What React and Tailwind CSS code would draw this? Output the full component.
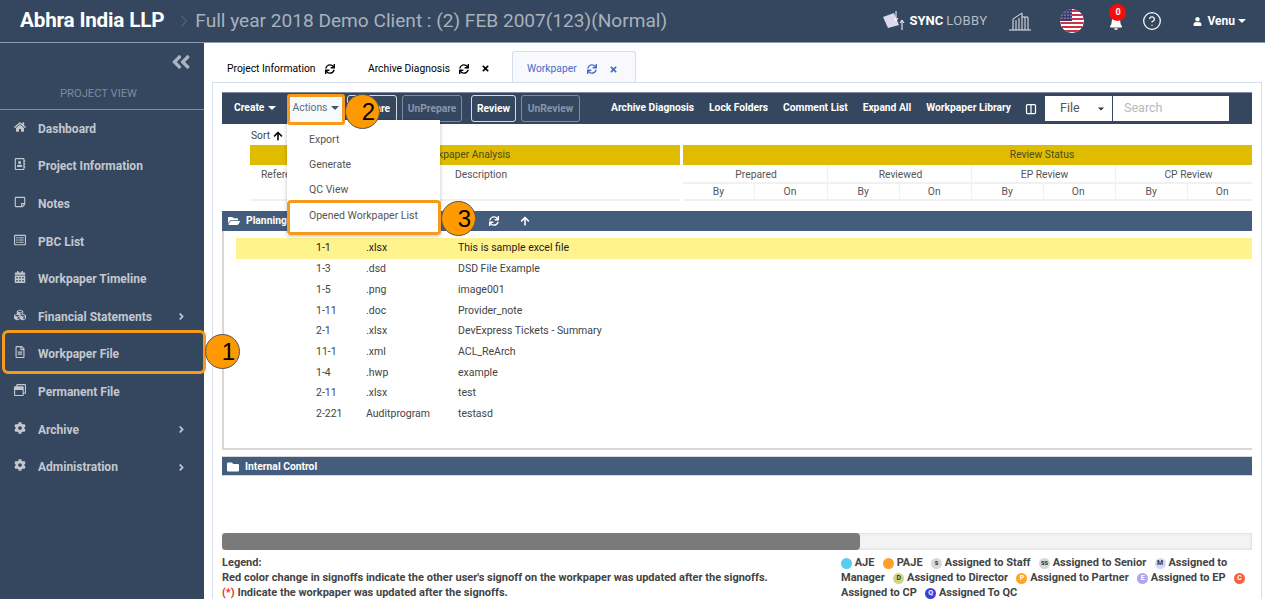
import { ChevronRight, CircleHelp, Columns2 } from 'lucide-react';
import { FaHome, FaCalendarAlt, FaCog, FaCubes, FaRegFileAlt, FaRegWindowRestore, FaRegStickyNote, FaRegListAlt, FaRegAddressBook, FaUser, FaBell, FaSync, FaArrowUp, FaFolderOpen, FaFolder, FaTimes, FaAngleDoubleLeft, FaAngleRight } from 'react-icons/fa';

const NAV = [
  { label: 'Dashboard', Icon: FaHome },
  { label: 'Project Information', Icon: FaRegAddressBook },
  { label: 'Notes', Icon: FaRegStickyNote },
  { label: 'PBC List', Icon: FaRegListAlt },
  { label: 'Workpaper Timeline', Icon: FaCalendarAlt },
  { label: 'Financial Statements', Icon: FaCubes, more: true },
  { label: 'Workpaper File', Icon: FaRegFileAlt },
  { label: 'Permanent File', Icon: FaRegWindowRestore },
  { label: 'Archive', Icon: FaCog, more: true },
  { label: 'Administration', Icon: FaCog, more: true },
];

const ROWS = [
  ['1-1', '.xlsx', 'This is sample excel file'],
  ['1-3', '.dsd', 'DSD File Example'],
  ['1-5', '.png', 'image001'],
  ['1-11', '.doc', 'Provider_note'],
  ['2-1', '.xlsx', 'DevExpress Tickets - Summary'],
  ['11-1', '.xml', 'ACL_ReArch'],
  ['1-4', '.hwp', 'example'],
  ['2-11', '.xlsx', 'test'],
  ['2-221', 'Auditprogram', 'testasd'],
];

const REVIEWS = ['Prepared', 'Reviewed', 'EP Review', 'CP Review'];

const Caret = ({ className = 'border-t-white' }) => (
  <span className={`inline-block w-0 h-0 border-x-[4px] border-x-transparent border-t-[4px] ${className}`} />
);

// numbered marks: the digit sits right of centre, as in the picture
const Callout = ({ n, className }) => (
  <div className={`absolute z-30 w-[35px] h-[35px] rounded-full bg-[#ff9900] border border-[#555] flex items-center justify-center pl-[12px] text-[24px] text-black font-['Liberation_Sans',sans-serif] ${className}`}>
    {n}
  </div>
);

const Flag = () => (
  <svg width="24" height="24" viewBox="0 0 24 24" className="rounded-full">
    <defs><clipPath id="c"><circle cx="12" cy="12" r="12" /></clipPath></defs>
    <g clipPath="url(#c)">
      <rect width="24" height="24" fill="#fff" />
      {[0, 4, 8, 12, 16, 20].map(y => <rect key={y} y={y + 1} width="24" height="2" fill="#c8334d" />)}
      <rect width="12" height="12" fill="#3c3b6e" />
      {[2, 5, 8, 11].map(x => [3, 6, 9].map(y => <circle key={x + '-' + y} cx={x} cy={y} r="0.6" fill="#fff" />))}
    </g>
  </svg>
);

const Dot = ({ bg, text = '', fg = 'text-[#333]' }) => (
  <span className={`inline-flex items-center justify-center align-text-bottom ml-[3px] first:ml-0 w-[11px] h-[11px] rounded-full text-[7px] leading-none font-bold ${bg} ${fg}`}>{text}</span>
);

const ToolButton = ({ children, w, off, className = '' }) => (
  <div className={`h-[27px] border rounded-[3px] flex items-center justify-center ${w} ${off ? 'border-[#7c8b9f] text-[#8796aa]' : 'border-white/80'} ${className}`}>{children}</div>
);

export default function App() {
  return (
    <div className="relative w-[1265px] h-[599px] overflow-hidden flex flex-col bg-white font-['Roboto','Liberation_Sans',sans-serif] text-[#333]">
      <header className="h-[43px] shrink-0 bg-[#34475f] border-b border-[#8b9bb0] flex items-center">
        <div className="ml-[20px] text-[20.7px] font-bold text-white tracking-[-0.2px]">Abhra India LLP</div>
        <ChevronRight className="ml-[10px] text-[#6f8097]" size={20} strokeWidth={1} />
        <div className="ml-[1px] text-[19.1px] text-[#a9b1bb]">Full year 2018 Demo Client : (2) FEB 2007(123)(Normal)</div>
        <div className="ml-auto flex items-center">
          <svg width="24" height="22" viewBox="0 0 24 22" className="mr-[4px]">
            <path d="M1 7 L12 3 L17 15 L6 18 Z" fill="#dcd8f2" />
            <path d="M14 1 V10 M12 8 L14 11 L16 8" stroke="#fff" fill="none" />
            <path d="M20 20 V11 M18 13 L20 10 L22 13" stroke="#fff" fill="none" />
          </svg>
          <span className="text-[13px] font-bold text-white">SYNC</span>
          <span className="ml-[3px] text-[13px] tracking-[0.4px] text-[#b4bcc8]">LOBBY</span>
          <svg width="22" height="20" viewBox="0 0 22 20" className="ml-[22px]" fill="none" stroke="#e5e7eb">
            <path d="M0 19 H22" />
            <path d="M4 19 V8 L13 2 V19 M7 9 V19 M10 7 V19" />
            <path d="M13 6 H19 V19 M16 6 V19" />
          </svg>
          <div className="ml-[29px]"><Flag /></div>
          <div className="relative ml-[25px] w-[14px] h-[16px]">
            <FaBell className="text-white mt-[3px]" size={14} />
            <span className="absolute -top-[9px] left-0 w-[17px] h-[17px] rounded-full bg-[#f50d0d] text-white text-[9px] font-bold flex items-center justify-center">0</span>
          </div>
          <CircleHelp className="ml-[19px] text-white" size={20} strokeWidth={1.5} />
          <FaUser className="ml-[31px] text-white" size={9} />
          <span className="ml-[5px] text-[12px] font-bold text-white">Venu</span>
          <Caret className="ml-[3px] border-t-white" />
          <div className="w-[19px]" />
        </div>
      </header>

      <div className="flex flex-1 min-h-0">
        <aside className="w-[204px] shrink-0 bg-[#34475f] flex flex-col">
          <div className="h-[38px] flex justify-end items-center pr-[12px]">
            <FaAngleDoubleLeft className="text-[#a9b4c2]" size={22} />
          </div>
          <div className="h-[28px] flex items-end justify-center pb-[6px] pr-[7px] text-[11.2px] text-[#7b8ba1]">PROJECT VIEW</div>
          <div className="h-px bg-[#7a8ea8]" />
          <nav className="flex flex-col">
            {NAV.map(({ label, Icon, more }) => (
              <div key={label} className="h-[37.6px] flex items-center pl-[14px] pr-[17px] text-[12px] font-bold text-[#c3c8cf]">
                <Icon size={12} className="w-[12px] -mt-[4px]" />
                <span className="ml-[12px]">{label}</span>
                {more && <FaAngleRight size={11} className="ml-auto" />}
              </div>
            ))}
          </nav>
        </aside>

        <main className="flex-1 min-w-0 flex flex-col">
          <div className="h-[39px] shrink-0 pt-[8px] pl-[23px] flex text-[10.3px] text-black">
            <div className="w-[141px] flex items-center pt-[4px]">
              <span>Project Information</span>
              <FaSync size={10} className="ml-[10px]" />
            </div>
            <div className="w-[144px] flex items-center pt-[4px]">
              <span>Archive Diagnosis</span>
              <FaSync size={10} className="ml-[9px]" />
              <FaTimes size={9} className="ml-[12px]" />
            </div>
            <div className="w-[124px] z-10 flex items-center pt-[4px] pl-[14px] text-[#4a6bc8] bg-[#f7f9fc] border border-[#d5dfee] border-b-0 rounded-t-[3px]">
              <span>Workpaper</span>
              <FaSync size={10} className="ml-[10px]" />
              <FaTimes size={9} className="ml-[12px]" />
            </div>
          </div>

          <div className="flex-1 min-h-0 ml-[8px] mr-[3px] border-l border-t border-r border-[#d5dfee] pl-[9px] pr-[9px] pt-[9px] flex flex-col overflow-hidden">
            <div className="h-[32px] shrink-0 bg-[#34475f] border-t border-[#7c8b9f] flex items-center text-[10.25px] font-bold text-white">
              <div className="w-[65px] pl-[12px] pb-[2px] flex items-center gap-[4px]">Create <Caret /></div>
              <div className="w-[58px]" />
              <ToolButton w="w-[50px]" className="ml-[2px]">Prepare</ToolButton>
              <ToolButton w="w-[60px]" off className="ml-[5px]">UnPrepare</ToolButton>
              <ToolButton w="w-[45px]" className="ml-[9px]">Review</ToolButton>
              <ToolButton w="w-[59px]" off className="ml-[5px]">UnReview</ToolButton>
              <div className="ml-[31px] pb-[1px]">Archive Diagnosis</div>
              <div className="ml-[15px] pb-[1px]">Lock Folders</div>
              <div className="ml-[15px] pb-[1px]">Comment List</div>
              <div className="ml-[15px] pb-[1px]">Expand All</div>
              <div className="ml-[15px] pb-[1px]">Workpaper Library</div>
              <Columns2 size={12} className="ml-[14px]" strokeWidth={2.5} />
              <div className="ml-[8px] w-[67px] h-[25px] bg-white flex items-center pl-[15px] pr-[7px] text-[12.5px] font-normal text-[#555] justify-between">
                File <Caret className="border-t-[#333] scale-75" />
              </div>
              <div className="ml-px w-[116px] h-[25px] bg-white flex items-center pl-[11px] text-[12.5px] font-normal text-[#b5b9bf]">Search</div>
            </div>

            <div className="h-[21px] shrink-0 pl-[29px] pt-[3px] flex items-center gap-[3px] text-[10.3px] text-[#444]">
              Sort <FaArrowUp size={10} className="text-black" />
            </div>

            <div className="h-[56px] shrink-0 flex gap-[3px] text-[10.3px] text-[#555] overflow-hidden">
              <div className="ml-[28px] w-[430px] shrink-0 border-b-2 border-[#f1f1f1]">
                <div className="h-[20px] bg-[#e0bc00] text-[#4d4a20] flex items-center justify-center">Workpaper Analysis</div>
                <div className="pt-[2px] relative">
                  <span className="ml-[11px]">Reference</span>
                  <span className="absolute left-[205px]">Description</span>
                </div>
              </div>
              <div className="w-[718px] shrink-0">
                <div className="h-[20px] bg-[#e0bc00] text-[#4d4a20] flex items-center justify-center">Review Status</div>
                <div className="grid grid-cols-[144px_144px_144px_144px] text-center">
                  {REVIEWS.map(name => (
                    <div key={name} className="border-l border-[#f1f1f1] first:border-l-0">
                      <div className="h-[19px] pt-[2px] pl-[2px] flex items-center justify-center border-b-2 border-[#f1f1f1]">{name}</div>
                      <div className="h-[17px] grid grid-cols-2 border-b-2 border-[#f1f1f1]">
                        <span className="flex items-center justify-center border-r border-[#f1f1f1]">By</span>
                        <span className="flex items-center justify-center pr-[2px]">On</span>
                      </div>
                    </div>
                  ))}
                </div>
              </div>
            </div>

            <div className="h-[20px] mt-[10px] shrink-0 bg-[#445d7c] flex items-center text-[10.3px] font-bold text-white">
              <FaFolderOpen size={12} className="ml-[6px]" />
              <span className="ml-[6px]">Planning</span>
              <FaSync size={10} className="ml-[202px]" />
              <FaArrowUp size={10} className="ml-[21px]" />
            </div>
            <div className="h-[219px] shrink-0 border-l-2 border-b-2 border-[#d8d8d8] pt-[7px] pl-[12px] text-[10.5px] text-[#444]">
              {ROWS.map(([ref, ext, desc], i) => (
                <div key={ref} className={`h-[20.7px] flex items-center ${i === 0 ? 'bg-[#fff38e] text-[#222]' : ''}`}>
                  <span className="ml-[80px] w-[50px]">{ref}</span>
                  <span className="w-[92px]">{ext}</span>
                  <span>{desc}</span>
                </div>
              ))}
            </div>
            <div className="h-[20px] mt-[6px] shrink-0 bg-[#445d7c] border-y border-[#d8d8d8] pt-[1px] flex items-center text-[10.3px] font-bold text-white">
              <FaFolder size={12} className="ml-[5px]" />
              <span className="ml-[6px]">Internal Control</span>
            </div>

            <div className="h-[17px] mt-[57px] shrink-0 bg-[#f3f3f3] shadow-[inset_0_0_3px_#ccc]">
              <div className="w-[638px] h-full bg-[#7a7a7a] rounded-[4px]" />
            </div>

            <div className="flex justify-between mt-[5px] text-[11px] font-bold leading-[15px] text-[#444]">
              <div className="w-[610px]">
                <div>Legend:</div>
                <div className="whitespace-nowrap">Red color change in signoffs indicate the other user's signoff on the workpaper was updated after the signoffs.</div>
                <div><span className="text-[#e0352b]">(*)</span> Indicate the workpaper was updated after the signoffs.</div>
              </div>
              <div className="w-[411px]">
                <Dot bg="bg-[#5ccbf0]" /> AJE &nbsp;<Dot bg="bg-[#ff9f2e]" /> PAJE &nbsp;<Dot bg="bg-[#d8d8d8]" text="s" /> Assigned to Staff &nbsp;<Dot bg="bg-[#d8d8d8]" text="ss" /> Assigned to Senior &nbsp;<Dot bg="bg-[#d9d6f2]" text="M" /> Assigned to Manager &nbsp;<Dot bg="bg-[#d5d47a]" text="D" /> Assigned to Director &nbsp;<Dot bg="bg-[#f9a825]" text="P" fg="text-white" /> Assigned to Partner &nbsp;<Dot bg="bg-[#b1a5f5]" text="E" fg="text-white" /> Assigned to EP &nbsp;<Dot bg="bg-[#f4623f]" text="C" fg="text-white" /> Assigned to CP &nbsp;<Dot bg="bg-[#3f3fd8]" text="Q" fg="text-white" /> Assigned To QC
              </div>
            </div>
          </div>
        </main>
      </div>

      {/* sidebar highlight */}
      <div className="absolute z-20 left-[2px] top-[330px] w-[204px] h-[44px] border-[3px] border-[#f59a1b] rounded-[6px]" />
      <Callout n="1" className="left-[205px] top-[334px]" />

      {/* actions dropdown */}
      <div className="absolute z-20 left-[287px] top-[120px] w-[153px] h-[115px] bg-white shadow-[0_1px_4px_rgba(0,0,0,0.25)] text-[10.5px] text-[#555] pl-[22px] pt-[7px]">
        <div className="h-[25.3px] flex items-center">Export</div>
        <div className="h-[25.3px] flex items-center">Generate</div>
        <div className="h-[25.3px] flex items-center">QC View</div>
        <div className="h-[25.3px] flex items-center">Opened Workpaper List</div>
      </div>
      <div className="absolute z-20 left-[287px] top-[94px] w-[58px] h-[31px] pb-[3px] bg-[#f7f9fb] border-[3px] border-[#f59a1b] rounded-[3px] flex items-center justify-center gap-[4px] text-[10.3px] text-[#5b6d82]">
        Actions <Caret className="border-t-[#44566c]" />
      </div>
      <Callout n="2" className="left-[345px] top-[94px]" />
      <div className="absolute z-20 left-[287px] top-[200px] w-[154px] h-[35px] border-[3px] border-[#f59a1b] rounded-[4px]" />
      <Callout n="3" className="left-[441px] top-[201px]" />
    </div>
  );
}
